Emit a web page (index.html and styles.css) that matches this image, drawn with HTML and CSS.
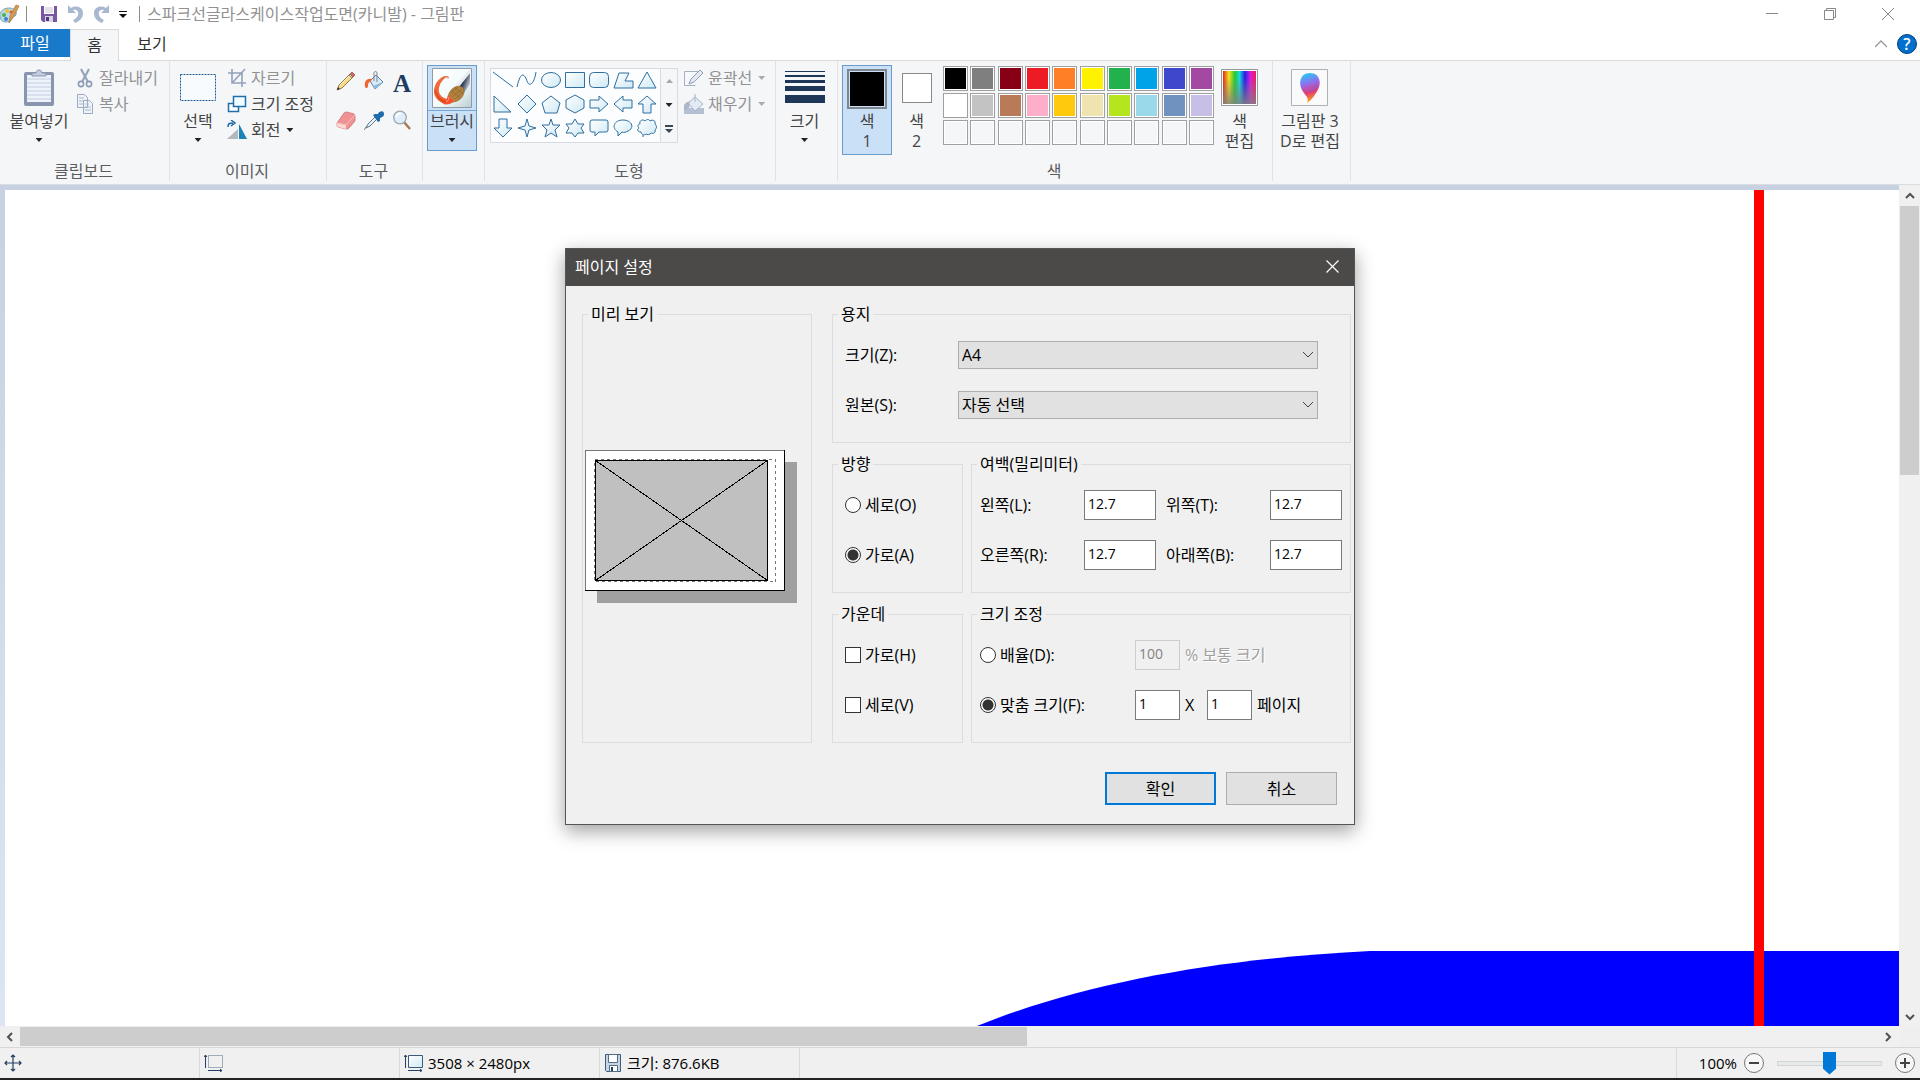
FILE: index.html
```html
<!DOCTYPE html>
<html lang="ko">
<head>
<meta charset="utf-8">
<title>스파크선글라스케이스작업도면(카니발) - 그림판</title>
<link rel="stylesheet" href="styles.css">
</head>
<body>
<svg class="defs" aria-hidden="true">
  <defs>
    <linearGradient id="shapeFill" x1="0" y1="0" x2="1" y2="1"><stop offset="0" stop-color="#fff"/><stop offset="1" stop-color="#cfe9f5"/></linearGradient>
    <linearGradient id="steel" x1="0" y1="0" x2="1" y2=".6"><stop offset="0" stop-color="#f2f5fa"/><stop offset=".35" stop-color="#8d98ab"/><stop offset=".6" stop-color="#28344b"/><stop offset="1" stop-color="#c6cedb"/></linearGradient>
    <linearGradient id="tile" x1="0" y1="0" x2="1" y2="1"><stop offset="0" stop-color="#fff"/><stop offset=".6" stop-color="#f1fafa"/><stop offset="1" stop-color="#b9cdd2"/></linearGradient>
    <linearGradient id="rainbow" x1="0" y1="0" x2="1" y2="0"><stop offset="0" stop-color="#e8211d"/><stop offset=".18" stop-color="#f5e51b"/><stop offset=".36" stop-color="#20c832"/><stop offset=".5" stop-color="#19d8dc"/><stop offset=".66" stop-color="#2020e8"/><stop offset=".83" stop-color="#d81be0"/><stop offset="1" stop-color="#f01c50"/></linearGradient>
    <linearGradient id="fadeGray" x1="0" y1="0" x2="0" y2="1"><stop offset=".2" stop-color="#808080" stop-opacity="0"/><stop offset="1" stop-color="#808080" stop-opacity=".85"/></linearGradient>
    <linearGradient id="drop" x1=".3" y1="0" x2=".5" y2="1"><stop offset="0" stop-color="#22cdf2"/><stop offset=".35" stop-color="#8f6ff0"/><stop offset=".65" stop-color="#e03a78"/><stop offset="1" stop-color="#ffb400"/></linearGradient>
  </defs>
</svg>
<div class="app">
  <header class="titlebar">
    <svg class="logo" width="20" height="20" viewBox="0 0 20 20"><path d="M0 13C-1 8 3 4 9 4c5 0 8 3 7 7-1 2-3 1-4 3 0 3-3 4-7 4-3 0-4-2-5-5z" fill="#b9d9e8" stroke="#7ea3b5"/><circle cx="4" cy="11" r="2" fill="#4fb04f"/><circle cx="7" cy="7" r="2" fill="#f0c030"/><circle cx="11" cy="8" r="1.600" fill="#dd5a3c"/><circle cx="6" cy="15" r="2" fill="#3f82cf"/><path d="M16 1l3 1-5 10-5 7 1-7z" fill="#d99a4e" stroke="#a87238" stroke-width=".7"/></svg>
    <span class="vline"></span>
    <button class="quick" aria-label="저장"><svg width="16" height="16" viewBox="0 0 16 16"><path d="M0 0h16v16H2l-2-2z" fill="#7a56a3"/><path d="M3 0h10v8H3z" fill="#fff"/><path d="M4 2h8M4 4h8M4 6h8" stroke="#c9bfd6"/><path d="M4 10h8v6H4z" fill="#d9d4e4"/><path d="M5 11h3v4H5z" fill="#513879"/></svg></button>
    <button class="quick" aria-label="실행 취소"><svg width="17" height="19" viewBox="0 0 17 19"><path d="M1 1v8h8L6 6c4-1 6 2 5 5-1 3-3 4-5 5l2 3c5-2 8-5 8-10C16 3 9 1 4 4z" fill="#a9b7d1"/></svg></button>
    <button class="quick redo" aria-label="다시 실행"><svg width="17" height="19" viewBox="0 0 17 19"><path d="M16 1v8H8l3-3C7 5 5 8 6 11c1 3 3 4 5 5l-2 3C4 17 1 14 1 9 1 3 8 1 13 4z" fill="#a9b7d1"/></svg></button>
    <button class="quick more" aria-label="빠른 실행 도구 모음 사용자 지정"><svg width="8" height="8" viewBox="0 0 8 8"><path d="M0 0h8v1H0zM0 3h8L4 7z" fill="#111"/></svg></button>
    <span class="vline"></span>
    <h1 class="title">스파크선글라스케이스작업도면(카니발) - 그림판</h1>
    <div class="window-buttons">
      <button aria-label="최소화"><svg width="12" height="12" viewBox="0 0 12 12"><path d="M0 5.500h12" stroke="#888"/></svg></button>
      <button aria-label="이전 크기로 복원"><svg width="12" height="12" viewBox="0 0 12 12"><path d="M.5 2.500h9v9h-9zM2.500 2.500v-2h9v9h-2" fill="none" stroke="#888"/></svg></button>
      <button aria-label="닫기"><svg width="12" height="12" viewBox="0 0 12 12"><path d="M0 0l12 12M12 0L0 12" stroke="#888"/></svg></button>
    </div>
  </header>
  <nav class="tabs">
    <button class="tab file">파일</button>
    <button class="tab active">홈</button>
    <button class="tab">보기</button>
    <div class="tab-tools">
      <button aria-label="리본 최소화"><svg width="12" height="8" viewBox="0 0 12 8"><path d="M0 7l6-6 6 6" fill="none" stroke="#999" stroke-width="1.300"/></svg></button>
      <button class="help" aria-label="도움말">?</button>
    </div>
  </nav>

  <section class="ribbon">
    <div class="group clipboard">
      <div class="group-body">
        <button class="big"><span class="big-icon"><svg width="32" height="38" viewBox="0 0 32 38"><rect x="1" y="3" width="30" height="34" rx="2" fill="#8795ae"/><path d="M4 6h24v27H4z" fill="#edf2fb"/><path d="M4 10h24M4 14h24M4 18h24M4 22h24M4 26h24M4 30h24" stroke="#c3cee0"/><path d="M9 7V4h4c0-4 6-4 6 0h4v3z" fill="#c5cede" stroke="#8795ae"/></svg></span><span>붙여넣기</span><i class="arrow"></i></button>
        <div class="stack">
          <button class="small muted"><svg width="18" height="20" viewBox="0 0 18 20"><path d="M5 1l7 13M13 1L6 14" stroke="#98a5b8" stroke-width="2.200"/><circle cx="5" cy="16" r="2.600" fill="none" stroke="#8b9cb6" stroke-width="1.600"/><circle cx="13" cy="16" r="2.600" fill="none" stroke="#8b9cb6" stroke-width="1.600"/></svg>잘라내기</button>
          <button class="small muted"><svg width="18" height="20" viewBox="0 0 18 20"><path d="M1.500.5h7l3 3v10h-10zM7.500 6.500h6l3 3v10h-9z" fill="#eef2f9" stroke="#9dabc2"/><path d="M3 4h5M3 7h4M3 10h4M9 10h4M9 13h6M9 16h6" stroke="#aebbd0"/></svg>복사</button>
        </div>
      </div>
      <div class="group-label">클립보드</div>
    </div>
    <div class="group image">
      <div class="group-body">
        <button class="big"><span class="big-icon"><svg width="36" height="28" viewBox="0 0 36 28"><rect x=".5" y=".5" width="35" height="26" fill="#f8fbfe" stroke="#205a91" stroke-dasharray="2 1"/></svg></span><span>선택</span><i class="arrow"></i></button>
        <div class="stack">
          <button class="small muted"><svg width="20" height="20" viewBox="0 0 20 20"><path d="M5 1v14h14M1 5h14v14M6 14L18 1" fill="none" stroke="#93a2ba" stroke-width="1.600"/></svg>자르기</button>
          <button class="small"><svg width="20" height="20" viewBox="0 0 20 20"><path d="M1.500 9.500h10v8h-10z" fill="#fff" stroke="#1e6fa8" stroke-width="1.500"/><path d="M6.500 2.500h12v10h-12z" fill="#f2fbff" stroke="#1e6fa8" stroke-width="1.500"/></svg>크기 조정</button>
          <button class="small"><svg width="20" height="20" viewBox="0 0 20 20"><path d="M0 19h11V9z" fill="#b3b8bf"/><path d="M12 19V4l8 15z" fill="#1c83b6"/><path d="M1 7c0-4 2-4 5-4M4 0l4 3-4 3" fill="none" stroke="#1a65a8" stroke-width="1.500"/></svg>회전<i class="arrow"></i></button>
        </div>
      </div>
      <div class="group-label">이미지</div>
    </div>
    <div class="group tools">
      <div class="group-body tool-grid">
        <button aria-label="연필"><svg width="20" height="20" viewBox="0 0 20 20"><path d="M1 19l2-5L14 3l3 3L6 17z" fill="#f6dc8c" stroke="#8c6a3c" stroke-width=".9"/><path d="M4 14l10-10" stroke="#fff3c4"/><path d="M14 3l2-2 3 3-2 2z" fill="#d96864" stroke="#8a4c4c" stroke-width=".7"/><path d="M13 4l3 3" stroke="#6d8f9c"/><path d="M1 19l1-3 2 2z" fill="#333"/></svg></button>
        <button aria-label="색 채우기"><svg width="20" height="20" viewBox="0 0 20 20"><path d="M6 10l6-6 7 7-8 7z" fill="#d9eaf5" stroke="#5482aa" stroke-linejoin="round"/><path d="M19 11l-8 7-2-3z" fill="#8fbadb"/><path d="M8 8C3 7 0 10 1 16c1 2 3 1 3-1 0-3 1-4 3-5z" fill="#ef6533"/><path d="M10 10V2c0-2 3-2 3 0v9" fill="none" stroke="#7a8591"/></svg></button>
        <button aria-label="텍스트" class="letter">A</button>
        <button aria-label="지우개"><svg width="20" height="20" viewBox="0 0 20 20"><path d="M1 13L8 3q1-1 3-1l7 2q1 1 1 2v5l-6 7q-1 1-3 1l-8-2q-1 0-1-2z" fill="#ef9293" stroke="#cf7376" stroke-width=".8"/><path d="M1 13l9 2v4l-8-2q-1 0-1-2z" fill="#fbd9d0"/><path d="M1 13l9 2 9-10" fill="none" stroke="#ffc0be"/></svg></button>
        <button aria-label="색 선택"><svg width="20" height="20" viewBox="0 0 20 20"><path d="M2 18l2-4 7-7 2 2-7 7z" fill="#e6f0f8" stroke="#566b7f" stroke-width=".9"/><path d="M9 5l2-1 3 0c1-3 6-4 6 0 0 3-2 3-4 4l0 3-2 1z" fill="#1f6bab"/><path d="M0 20l3-4" stroke="#777"/></svg></button>
        <button aria-label="돋보기"><svg width="20" height="20" viewBox="0 0 20 20"><path d="M12 12l6 7" stroke="#a77a55" stroke-width="2.500"/><circle cx="8" cy="7.500" r="6.300" fill="#dfeefa" stroke="#9aa5af" stroke-width="1.300"/><path d="M4 7c1-3 3-4 5-3" stroke="#fff" stroke-width="2" fill="none"/></svg></button>
      </div>
      <div class="group-label">도구</div>
    </div>
    <div class="group brush">
      <div class="group-body">
        <button class="big selected"><span class="big-icon"><svg width="40" height="40" viewBox="0 0 40 40"><path d="M.5.500h39v39H.500z" fill="url(#tile)" stroke="#8f9aa5"/><path d="M38 2v14l-6 9-8-6z" fill="url(#steel)"/><path d="M38 1L23 18l3 2L39 4z" fill="#e9edf2"/><path d="M17 9C12 5 1 14 2 25c1 6 7 11 13 11l1-5C9 30 6 25 7 20c1-5 4-9 8-11l1 2z" fill="#f06a3c"/><path d="M3 23c1 7 6 11 11 13l1-3C9 31 5 28 4 21z" fill="#dd4a1e"/><path d="M16 29c1-5 3-8 7-10 5-2 9 0 9 4 0 6-5 11-12 11z" fill="#b3823f" stroke="#8d6029" stroke-width=".6"/><path d="M19 25l7-6M20 29l10-8M23 31l8-7M20 23l8 7M23 20l8 6" stroke="#906428" stroke-width=".7"/><path d="M16 27l6 6c-2 3-7 4-11 3 3-2 4-5 5-9z" fill="#f4502c"/><path d="M14 34c2-1 3-3 3-5" stroke="#ffa184" fill="none"/></svg></span><span>브러시</span><i class="arrow"></i></button>
      </div>
    </div>
    <div class="group shapes">
      <div class="group-body">
        <div class="gallery">
          <div class="gallery-grid">
            <button aria-label="선"><svg viewBox="0 0 20 18"><path d="M0 1l20 15"/></svg></button>
            <button aria-label="곡선"><svg viewBox="0 0 20 18"><path d="M0 16C4-2 8 4 10 10s7 4 9-9" fill="none"/></svg></button>
            <button aria-label="타원"><svg viewBox="0 0 20 18"><ellipse cx="10" cy="9" rx="9.500" ry="7.500"/></svg></button>
            <button aria-label="직사각형"><svg viewBox="0 0 20 18"><path d="M.5 1.500h19v15H.500z"/></svg></button>
            <button aria-label="둥근 직사각형"><svg viewBox="0 0 20 18"><rect x=".5" y="1.500" width="19" height="15" rx="4"/></svg></button>
            <button aria-label="다각형"><svg viewBox="0 0 20 18"><path d="M6 2h10l-4 8h8v7H1z"/></svg></button>
            <button aria-label="삼각형"><svg viewBox="0 0 20 18"><path d="M10 1l9 16H1z"/></svg></button>
            <button aria-label="직각 삼각형"><svg viewBox="0 0 20 18"><path d="M1 1v16h17z"/></svg></button>
            <button aria-label="다이아몬드"><svg viewBox="0 0 20 18"><path d="M10 0l9 9-9 9-9-9z"/></svg></button>
            <button aria-label="오각형"><svg viewBox="0 0 20 18"><path d="M10 1l9 7-3 10H4L1 8z"/></svg></button>
            <button aria-label="육각형"><svg viewBox="0 0 20 18"><path d="M10 0l9 5v8l-9 5-9-5V5z"/></svg></button>
            <button aria-label="오른쪽 화살표"><svg viewBox="0 0 20 18"><path d="M1 5h9V1l9 8-9 8v-4H1z"/></svg></button>
            <button aria-label="왼쪽 화살표"><svg viewBox="0 0 20 18"><path d="M19 5h-9V1L1 9l9 8v-4h9z"/></svg></button>
            <button aria-label="위쪽 화살표"><svg viewBox="0 0 20 18"><path d="M10 1l9 8h-5v9H6V9H1z"/></svg></button>
            <button aria-label="아래쪽 화살표"><svg viewBox="0 0 20 18"><path d="M10 18l9-9h-5V0H6v9H1z"/></svg></button>
            <button aria-label="4각 별"><svg viewBox="0 0 20 18"><path d="M10 0l2 7 7 2-7 2-2 7-2-7-7-2 7-2z"/></svg></button>
            <button aria-label="5각 별"><svg viewBox="0 0 20 18"><path d="M10 0l2 6h7l-5 5 2 7-6-4-6 4 2-7-5-5h7z"/></svg></button>
            <button aria-label="6각 별"><svg viewBox="0 0 20 18"><path d="M10 0l3 5h6l-3 4 3 5h-6l-3 4-3-4H1l3-5-3-4h6z"/></svg></button>
            <button aria-label="모서리가 둥근 사각형 설명선"><svg viewBox="0 0 20 18"><path d="M3 1h14q2 0 2 2v8q0 2-2 2h-7l-4 4v-4H3q-2 0-2-2V3q0-2 2-2z"/></svg></button>
            <button aria-label="타원형 설명선"><svg viewBox="0 0 20 18"><path d="M5 13C-2 9 1 1 10 1s12 8 5 11c-2 1-4 2-6 1l-4 4z"/></svg></button>
            <button aria-label="구름 모양 설명선"><svg viewBox="0 0 20 18"><path d="M3 5C2 1 6 0 8 2c2-2 4-2 5 0 3-2 6 0 5 3 2 2 2 4 0 6 1 3-2 4-4 3-1 2-4 2-5 1-2 2-5 0-5-2-4 0-4-3-2-4-2-2-1-4 1-4zM5 17h2"/></svg></button>
          </div>
          <div class="gallery-scroll">
            <button aria-label="위로"><i class="arrow up"></i></button>
            <button aria-label="아래로"><i class="arrow"></i></button>
            <button aria-label="자세히"><svg width="8" height="8" viewBox="0 0 8 8"><path d="M0 0h8v2H0zM0 4h8L4 8z" fill="#3c4654"/></svg></button>
          </div>
        </div>
        <div class="stack">
          <button class="small muted"><svg width="20" height="18" viewBox="0 0 20 18"><path d="M15 2H.500v15L17 6" fill="#f5f8fc" stroke="none"/><path d="M14 2.500H.500v14h11" fill="none" stroke="#a6afbf"/><path d="M5 15l2-5 9-9 3 3-9 9z" fill="#e4e8f0" stroke="#919db3"/></svg>윤곽선<i class="arrow"></i></button>
          <button class="small muted"><svg width="20" height="20" viewBox="0 0 20 20"><path d="M0 14h20v6H0z" fill="#b4c0d4"/><path d="M4 9l7-6 8 7-8 7z" fill="#e4eaf3" stroke="#a9b4c6"/><path d="M5 8c-5 1-5 4-4 8l4-3zM11 8V0" fill="#acb8cc" stroke="#a9b4c6"/></svg>채우기<i class="arrow"></i></button>
        </div>
      </div>
      <div class="group-label">도형</div>
    </div>
    <div class="group size">
      <div class="group-body">
        <button class="big"><span class="big-icon"><svg width="40" height="34" viewBox="0 0 40 34"><path d="M0 0h40v1H0zM0 4h40v2H0zM0 9h40v3H0zM0 15h40v5H0zM0 24h40v8H0z" fill="#1e3658"/></svg></span><span>크기</span><i class="arrow"></i></button>
      </div>
    </div>
    <div class="group colors">
      <div class="group-body">
        <button class="big color-one selected"><span class="big-icon"><i class="swatch-large"></i></span><span>색</span><span>1</span></button>
        <button class="big color-two"><span class="big-icon"><i class="swatch-medium"></i></span><span>색</span><span>2</span></button>
        <div class="palette">
          <button class="black" aria-label="검정"></button><button class="gray" aria-label="회색"></button><button class="maroon" aria-label="진한 빨강"></button><button class="red" aria-label="빨강"></button><button class="orange" aria-label="주황"></button><button class="yellow" aria-label="노랑"></button><button class="green" aria-label="녹색"></button><button class="sky" aria-label="옥색"></button><button class="indigo" aria-label="남색"></button><button class="purple" aria-label="자주"></button>
          <button class="white" aria-label="흰색"></button><button class="silver" aria-label="밝은 회색"></button><button class="brown" aria-label="갈색"></button><button class="pink" aria-label="장미색"></button><button class="gold" aria-label="황금색"></button><button class="cream" aria-label="밝은 노랑"></button><button class="lime" aria-label="라임"></button><button class="aqua" aria-label="밝은 옥색"></button><button class="slate" aria-label="청회색"></button><button class="lavender" aria-label="연보라"></button>
          <button aria-label="사용자 색 1"></button><button aria-label="사용자 색 2"></button><button aria-label="사용자 색 3"></button><button aria-label="사용자 색 4"></button><button aria-label="사용자 색 5"></button><button aria-label="사용자 색 6"></button><button aria-label="사용자 색 7"></button><button aria-label="사용자 색 8"></button><button aria-label="사용자 색 9"></button><button aria-label="사용자 색 10"></button>
        </div>
        <button class="big edit-colors"><span class="big-icon"><svg width="38" height="38" viewBox="0 0 38 38"><path d="M.5.500h36v36H.500z" fill="#fff" stroke="#999"/><path d="M2 2h33v33H2z" fill="url(#rainbow)"/><path d="M2 2h33v33H2z" fill="url(#fadeGray)"/></svg></span><span>색</span><span>편집</span></button>
      </div>
      <div class="group-label">색</div>
    </div>
    <div class="group paint3d">
      <div class="group-body">
        <button class="big"><span class="big-icon"><svg width="38" height="38" viewBox="0 0 38 38"><path d="M.5.500h36v36H.500z" fill="#fafafa" stroke="#b0b0b0"/><path d="M16 34c2-4 0-6-3-10C6 15 9 4 19 4s13 11 6 20c-3 5-6 8-9 10z" fill="url(#drop)"/><path d="M22 7c7 6 2 13-6 16 9 0 14-9 6-16z" fill="#5b6ff0" opacity=".6"/></svg></span><span>그림판 3</span><span>D로 편집</span></button>
      </div>
    </div>
  </section>

  <main class="workspace">
    <div class="canvas">
      <svg class="drawing" width="1894" height="836" viewBox="5 190 1894 836"><path d="M977 1026C1090 980 1230 958 1370 951h529v75z" fill="#00f"/><path d="M1754 190h10v836h-10z" fill="#f00"/></svg>
    </div>
    <div class="scroll vertical"><button aria-label="위로 스크롤"><svg width="10" height="8" viewBox="0 0 10 8"><path d="M1 6l4-4 4 4" fill="none" stroke="#505050" stroke-width="2"/></svg></button><div class="thumb"></div><button class="end" aria-label="아래로 스크롤"><svg width="10" height="8" viewBox="0 0 10 8"><path d="M1 2l4 4 4-4" fill="none" stroke="#505050" stroke-width="2"/></svg></button></div>
    <div class="scroll horizontal"><button aria-label="왼쪽으로 스크롤"><svg width="8" height="10" viewBox="0 0 8 10"><path d="M6 1L2 5l4 4" fill="none" stroke="#505050" stroke-width="2"/></svg></button><div class="thumb"></div><button class="end" aria-label="오른쪽으로 스크롤"><svg width="8" height="10" viewBox="0 0 8 10"><path d="M2 1l4 4-4 4" fill="none" stroke="#505050" stroke-width="2"/></svg></button></div>
  </main>

  <footer class="status">
    <div class="cell"><svg width="18" height="18" viewBox="0 0 18 18"><path d="M9 1v16M1 9h16M7 3l2-2 2 2M7 15l2 2 2-2M3 7L1 9l2 2M15 7l2 2-2 2" fill="none" stroke="#233f63" stroke-width="1.200"/></svg></div>
    <div class="cell"><svg width="20" height="18" viewBox="0 0 20 18"><path d="M4.500 1.500h14v12h-14z" fill="none" stroke="#55677d" stroke-dasharray="1 1"/><path d="M1.500 1v13M0 3l1.500-2L3 3M4 16.500h14M16 15l2 1.500-2 1.500" fill="none" stroke="#233f63"/></svg></div>
    <div class="cell"><svg width="20" height="18" viewBox="0 0 20 18"><path d="M4.500 1.500h14v12h-14z" fill="url(#shapeFill)" stroke="#3d5878"/><path d="M1.500 1v13M0 3l1.500-2L3 3M4 16.500h14M16 15l2 1.500-2 1.500" fill="none" stroke="#233f63"/></svg>3508 × 2480px</div>
    <div class="cell disk"><svg width="18" height="18" viewBox="0 0 18 18"><path d="M1.500.5h15v17h-14l-1-1z" fill="#c9d4e2" stroke="#405b7c"/><path d="M4.500.5h9v8h-9zM5.500 11.500h8v6h-8z" fill="#fff" stroke="#526b89"/><path d="M7 13h2v4H7z" fill="#233f63"/></svg>크기: 876.6KB</div>
    <div class="zoom">
      <label for="zoom">100%</label>
      <button aria-label="축소"><svg width="20" height="20" viewBox="0 0 20 20"><circle cx="10" cy="10" r="9.500" fill="#f7f7f7" stroke="#777"/><path d="M5 10h10" stroke="#444" stroke-width="2"/></svg></button>
      <input id="zoom" type="range" min="0" max="100" value="50">
      <button aria-label="확대"><svg width="20" height="20" viewBox="0 0 20 20"><circle cx="10" cy="10" r="9.500" fill="#f7f7f7" stroke="#777"/><path d="M5 10h10M10 5v10" stroke="#444" stroke-width="2"/></svg></button>
    </div>
  </footer>
</div>

<form class="dialog" role="dialog" aria-labelledby="dialog-title">
  <div class="dialog-title"><h2 id="dialog-title">페이지 설정</h2><button type="button" aria-label="닫기"><svg width="13" height="13" viewBox="0 0 13 13"><path d="M.5.500l12 12M12.500.500l-12 12" stroke="#fff" stroke-width="1.200"/></svg></button></div>
  <div class="dialog-body">
    <fieldset class="preview"><legend>미리 보기</legend>
      <svg width="212" height="154" viewBox="0 0 212 154" shape-rendering="crispEdges"><path d="M12 12h200v141H12z" fill="#a0a0a0"/><path d="M.5.500h199v140H.500z" fill="#fff" stroke="#777"/><path d="M0 140.500h199.500V0" fill="none" stroke="#000"/><path d="M9.500 9.500h181v122H9.500z" fill="none" stroke="#777" stroke-dasharray="3 3"/><path d="M10.500 10.500h172v120h-172z" fill="#c0c0c0" stroke="#000"/><path d="M10.500 10.500l172 120M182.500 10.500l-172 120" stroke="#000"/></svg>
    </fieldset>
    <div class="settings">
      <fieldset class="paper"><legend>용지</legend>
        <div class="row"><label for="paper-size">크기(Z):</label><span class="select"><select id="paper-size"><option>A4</option></select><svg width="10" height="6" viewBox="0 0 10 6"><path d="M0 0l5 5 5-5" fill="none" stroke="#444"/></svg></span></div>
        <div class="row"><label for="paper-source">원본(S):</label><span class="select"><select id="paper-source"><option>자동 선택</option></select><svg width="10" height="6" viewBox="0 0 10 6"><path d="M0 0l5 5 5-5" fill="none" stroke="#444"/></svg></span></div>
      </fieldset>
      <fieldset class="choices"><legend>방향</legend>
        <label class="row"><input type="radio" name="direction">세로(O)</label>
        <label class="row"><input type="radio" name="direction" checked>가로(A)</label>
      </fieldset>
      <fieldset class="margins"><legend>여백(밀리미터)</legend>
        <div class="row"><label for="left">왼쪽(L):</label><input id="left" type="text" value="12.7"><label for="top">위쪽(T):</label><input id="top" type="text" value="12.7"></div>
        <div class="row"><label for="right">오른쪽(R):</label><input id="right" type="text" value="12.7"><label for="bottom">아래쪽(B):</label><input id="bottom" type="text" value="12.7"></div>
      </fieldset>
      <fieldset class="choices"><legend>가운데</legend>
        <label class="row"><input type="checkbox">가로(H)</label>
        <label class="row"><input type="checkbox">세로(V)</label>
      </fieldset>
      <fieldset class="scaling"><legend>크기 조정</legend>
        <div class="row"><label class="option"><input type="radio" name="scaling">배율(D):</label><input id="percent" type="text" value="100" disabled><label class="disabled" for="percent">% 보통 크기</label></div>
        <div class="row"><label class="option"><input type="radio" name="scaling" checked>맞춤 크기(F):</label><input id="across" type="text" value="1"><label class="times" for="across">X</label><input id="down" type="text" value="1"><label for="down">페이지</label></div>
      </fieldset>
    </div>
  </div>
  <div class="dialog-actions"><button type="button" class="default">확인</button><button type="button">취소</button></div>
</form>
</body>
</html>
```

FILE: styles.css
```css
* { box-sizing: border-box; }
body { margin: 0; overflow: hidden; background: #fff; color: #000; font: 16px/20px "Open Sans", "Noto Sans CJK KR", sans-serif; }
button, input, select { font: inherit; color: inherit; margin: 0; }
button { padding: 0; border: 0; background: none; }
h1, h2 { margin: 0; font-size: 16px; font-weight: 400; }
svg { display: block; flex: none; }
.defs { position: absolute; width: 0; height: 0; }
.app { display: flex; flex-direction: column; height: 100vh; border-bottom: 2px solid #222; }

.titlebar { display: flex; align-items: center; height: 29px; flex: none; padding-bottom: 2px; }
.vline { width: 1px; height: 16px; background: #8c8c8c; }
.logo { margin-right: 6px; }
.quick { margin-left: 10px; }
.logo + .vline + .quick { margin-left: 14px; }
.quick.redo { margin-left: 9px; }
.quick.more { margin: 2px 12px 0 9px; }
.title { margin-left: 7px; color: #919191; }
.window-buttons { display: flex; gap: 46px; margin: 0 26px 0 auto; }

.tabs { display: flex; height: 32px; flex: none; border-bottom: 1px solid #d9dbdd; }
.tab { width: 66px; height: 30px; color: #333; }
.tab.file { width: 70px; height: 28px; color: #fff; background: #1979ca; }
.tab.active { width: 49px; height: 32px; padding-bottom: 2px; background: #f4f6f8; border: 1px solid #d9dbdd; border-bottom: 0; }
.tab-tools { display: flex; align-items: center; gap: 10px; margin: 0 3px 2px auto; }
.help { width: 20px; height: 20px; border: 1px solid #063f7c; border-radius: 50%; background: #006fce; color: #fff; line-height: 16px; font-weight: 600; }

.ribbon { display: flex; flex: none; height: 124px; padding-bottom: 3px; background: #f4f6f8; border-bottom: 1px solid #d9dce0; color: #444; }
.group { display: flex; flex-direction: column; justify-content: space-between; padding-top: 4px; border-right: 1px solid #e0e2e5; }
.group-body { display: flex; align-items: flex-start; padding-left: 4px; }
.group-label { padding-right: 2px; text-align: center; color: #5c5c5c; }
.clipboard { width: 170px; }
.clipboard .group-body { padding-left: 8px; }
.image { width: 157px; }
.image .group-body { padding-left: 10px; }
.tools { width: 96px; }
.brush { width: 62px; }
.shapes { width: 291px; }
.shapes .group-body { padding-left: 5px; }
.size { width: 62px; }
.size .group-body { padding-left: 3px; }
.colors { width: 435px; }
.paint3d { width: 78px; }
.paint3d .group-body { padding-left: 1px; }
.big { display: flex; flex-direction: column; align-items: center; width: 62px; height: 90px; white-space: nowrap; }
.big-icon { display: flex; align-items: center; justify-content: center; width: 100%; height: 46px; flex: none; }
.image .big { width: 36px; margin-right: 11px; }
.size .big { width: 51px; }
.paint3d .big { width: 72px; }
.brush .big { width: 50px; height: 86px; }
.big.selected { background: #c9e0f7; border: 1px solid #6a9bcb; }
.brush .big-icon { height: 45px; border-bottom: 1px solid #78a8d5; }
.arrow { width: 7px; height: 4px; flex: none; background: #222; clip-path: polygon(0 0, 100% 0, 50% 100%); }
.big .arrow { margin-top: 7px; }
.arrow.up { transform: rotate(180deg); background: #a5a9b0; }
.stack { display: flex; flex-direction: column; }
.small { display: flex; align-items: center; gap: 4px; height: 26px; white-space: nowrap; }
.clipboard .small { gap: 5px; margin-left: 6px; }
.small .arrow { margin-left: 2px; }
.muted { color: #929292; }
.muted .arrow { background: #aaa; }
.tool-grid { display: grid; grid-template-columns: repeat(3, 28px); grid-auto-rows: 39px; padding: 6px 0 0 5px; }
.tool-grid button { display: flex; align-items: center; justify-content: center; }
.tool-grid .letter { font: 700 25px/25px "Liberation Serif", serif; color: #1e3c62; }

.gallery { display: flex; width: 188px; height: 75px; margin: 3px 6px 0 0; border: 1px solid #d7dade; background: #fcfdfe; }
.gallery-grid { display: grid; grid-template-columns: repeat(7, 24px); grid-auto-rows: 24px; width: 169px; }
.gallery-grid button { display: flex; align-items: flex-start; justify-content: center; padding-top: 2px; }
.gallery-grid svg { width: 20px; height: 18px; fill: url(#shapeFill); stroke: #2f6e9e; stroke-width: 1; overflow: visible; }
.gallery-scroll { display: grid; grid-auto-rows: 24px; flex: 1; border-left: 1px solid #d7dade; background: #f4f6f8; }
.gallery-scroll button { display: flex; align-items: center; justify-content: center; }

.big.color-one { width: 50px; }
.big.color-two { width: 49px; }
.color-one.selected .big-icon { height: 45px; }
.swatch-large { width: 40px; height: 40px; border: 2px solid #7c8790; box-shadow: inset 0 0 0 1px #c9e0f7; background: #000; }
.swatch-medium { width: 30px; height: 30px; border: 1px solid #888; background: #fff; }
.palette { display: grid; grid-template-columns: repeat(10, 25px); grid-auto-rows: 25px; justify-content: space-between; row-gap: 2px; width: 271px; margin: 1px 0 0 2px; }
.palette button { border: 1px solid #a0a0a0; background: #f5f6f7; box-shadow: inset 0 0 0 1px #fff; }
.palette .black { background: #000; }
.palette .gray { background: #7f7f7f; }
.palette .maroon { background: #880015; }
.palette .red { background: #ed1c24; }
.palette .orange { background: #ff7f27; }
.palette .yellow { background: #fff200; }
.palette .green { background: #22b14c; }
.palette .sky { background: #00a2e8; }
.palette .indigo { background: #3f48cc; }
.palette .purple { background: #a349a4; }
.palette .white { background: #fff; }
.palette .silver { background: #c3c3c3; }
.palette .brown { background: #b97a57; }
.palette .pink { background: #ffaec9; }
.palette .gold { background: #ffc90e; }
.palette .cream { background: #efe4b0; }
.palette .lime { background: #b5e61d; }
.palette .aqua { background: #99d9ea; }
.palette .slate { background: #7092be; }
.palette .lavender { background: #c8bfe7; }
.big.edit-colors { width: 51px; }

.workspace { display: grid; flex: 1; min-height: 0; grid-template: minmax(0, 1fr) 20px / minmax(0, 1fr) 20px; background: #efefef; }
.canvas { overflow: hidden; margin: 0 1px 1px 0; padding: 5px 0 0 5px; background: linear-gradient(#c8d1e1 5px, #dce5f1 100%); }
.drawing { background: #fff; }
.scroll { display: flex; background: #f0f0f0; }
.scroll button { display: flex; flex: none; align-items: center; justify-content: center; width: 20px; height: 21px; }
.scroll .end { margin: auto 0 0; }
.vertical { flex-direction: column; }
.vertical .thumb { width: 19px; height: 32%; background: #cdcdcd; }
.scroll.horizontal button { width: 20px; height: 20px; }
.horizontal .thumb { width: 53%; height: 19px; background: #cdcdcd; }
.scroll.horizontal .end { margin: 0 2px 0 auto; }

.status { display: flex; height: 31px; flex: none; border-top: 1px solid #d7d7d7; background: #f0f0f0; font-size: 15px; }
.cell { display: flex; align-items: center; gap: 4px; width: 200px; padding-left: 4px; border-right: 1px solid #d9d9d9; }
.cell.disk { gap: 5px; }
.zoom { display: flex; align-items: center; gap: 13px; margin-left: auto; padding: 0 5px 0 22px; border-left: 1px solid #d9d9d9; }
.zoom label { margin-right: -6px; }
.zoom input { appearance: none; width: 105px; height: 24px; background: linear-gradient(#e7eaea, #e7eaea) center / 103px 3px no-repeat, linear-gradient(#d4d4d4, #d4d4d4) center / 100% 5px no-repeat; }
.zoom input::-webkit-slider-thumb { appearance: none; width: 13px; height: 23px; background: #0078d7; clip-path: polygon(0 0, 100% 0, 100% 75%, 50% 100%, 0 75%); }

.dialog { position: absolute; top: 248px; left: 50%; width: 790px; transform: translateX(-50%); border: 1px solid #555; background: #f0f0f0; box-shadow: 0 6px 18px rgba(0, 0, 0, .38); }
.dialog-title { display: flex; align-items: center; justify-content: space-between; height: 37px; padding: 0 15px 2px 9px; background: #4c4a48; color: #fff; }
.dialog-body { display: grid; grid-template-columns: 230px minmax(0, 1fr); gap: 20px; padding: 18px 3px 0 16px; }
.settings { display: grid; grid-template-columns: 131px minmax(0, 1fr); grid-auto-rows: 139px; gap: 11px 8px; }
fieldset { min-width: 0; margin: 0; padding: 16px 8px 0 12px; border: 1px solid #dcdcdc; }
legend { margin-left: -7px; padding: 0 3px; line-height: 20px; }
.paper { grid-column: 1 / -1; }
.preview { padding: 126px 0 0 2px; }
.preview legend { margin-left: 3px; }
.margins, .scaling { padding-left: 8px; }
.margins legend, .scaling legend { margin-left: -3px; }
.row { display: flex; align-items: center; height: 30px; white-space: nowrap; }
.row + .row { margin-top: 20px; }
.paper label { width: 113px; }
.select { display: flex; align-items: center; width: 360px; }
.select select { appearance: none; width: 100%; height: 28px; padding: 0 3px; border: 1px solid #adadad; border-radius: 0; background: #e1e1e1; }
.select svg { margin-left: -15px; pointer-events: none; }
input[type="text"] { height: 30px; padding: 0 3px 3px; border: 1px solid #7a7a7a; background: #fff; font-size: 14px; }
input[type="text"]:disabled { border-color: #ccc; background: #f0f0f0; color: #838383; }
input[type="radio"], input[type="checkbox"] { appearance: none; width: 16px; height: 16px; margin-right: 4px; border: 1px solid #333; background: #fff; }
input[type="radio"] { border-radius: 50%; }
input[type="radio"]:checked { background: radial-gradient(circle, #333 5px, #fff 6px); }
.margins label { width: 104px; }
.margins input { width: 72px; }
.margins input + label { padding-left: 10px; width: 114px; }
.scaling .option { display: flex; align-items: center; width: 155px; }
.scaling input[type="text"] { width: 45px; margin-right: 5px; }
.scaling .times { width: 22px; }
.disabled { color: #a0a0a0; text-shadow: 1px 1px #fff; }
.dialog-actions { display: flex; justify-content: flex-end; gap: 10px; padding: 29px 17px 19px; }
.dialog-actions button { width: 111px; height: 33px; border: 1px solid #adadad; background: #e1e1e1; }
.dialog-actions .default { border: 2px solid #0078d7; }
```
